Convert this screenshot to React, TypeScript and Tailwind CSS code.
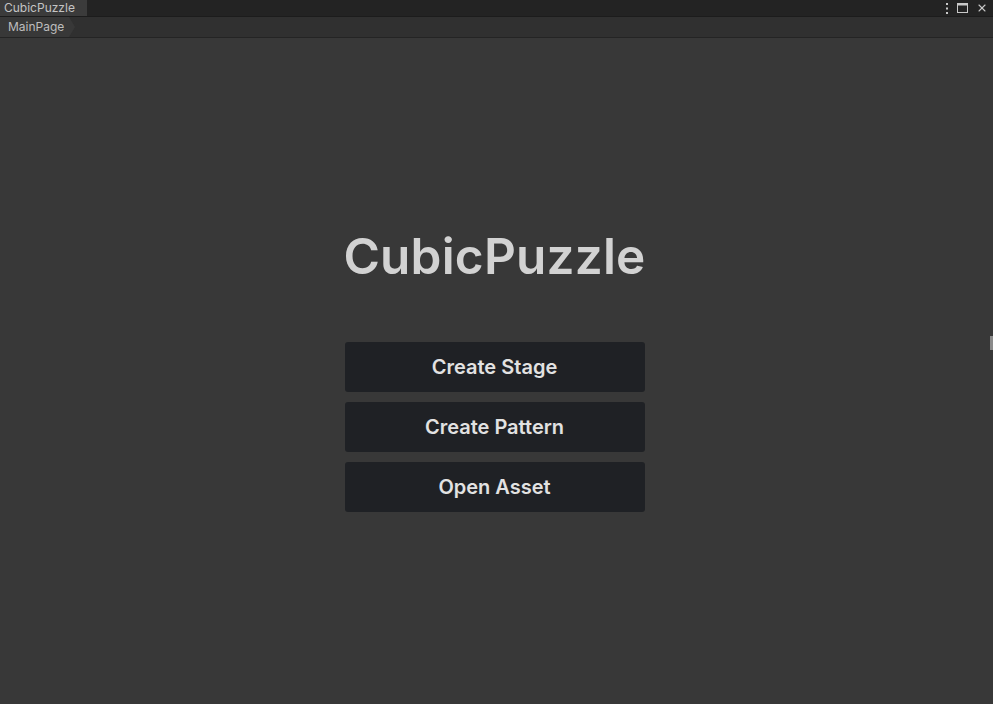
import { X } from 'lucide-react'

const buttons = ['Create Stage', 'Create Pattern', 'Open Asset']

export default function App() {
  return (
    <div className="w-[993px] h-[704px] flex flex-col bg-[#383838] overflow-hidden font-['Inter',sans-serif]">
      {/* window tab bar */}
      <div className="h-[17px] flex items-stretch bg-[#232323] border-b border-[#1c1c1c]">
        <div className="w-[87px] bg-[#3b3b3b] text-[#c4c4c4] text-[12px] leading-[16px] pl-[4px]">CubicPuzzle</div>
        <div className="flex-1" />
        <div className="flex items-center gap-[8px] pr-[5px] text-[#c8c8c8]">
          <svg width="4" height="11" viewBox="0 0 4 11">
            <rect x="1" y="0" width="2" height="2" fill="currentColor" />
            <rect x="1" y="4.5" width="2" height="2" fill="currentColor" />
            <rect x="1" y="9" width="2" height="2" fill="currentColor" />
          </svg>
          <svg width="11" height="10" viewBox="0 0 11 10">
            <rect x="0.5" y="0.5" width="10" height="9" fill="none" stroke="currentColor" />
            <rect x="0.5" y="0.5" width="10" height="2" fill="currentColor" />
          </svg>
          <X className="w-[12px] h-[12px]" strokeWidth={2.2} />
        </div>
      </div>

      {/* breadcrumb */}
      <div className="h-[21px] flex items-stretch bg-[#303030] border-b border-[#242424]">
        <div className="flex items-stretch">
          <div className="bg-[#383838] text-[#bdbdbd] text-[12px] leading-[20px] pl-[8px] pr-[2px]">MainPage</div>
          <svg width="9" height="20" viewBox="0 0 9 20">
            <polygon points="0,0 3,0 9,10 3,20 0,20" fill="#383838" />
          </svg>
        </div>
      </div>

      {/* main page */}
      <div className="flex-1 flex flex-col items-center pt-[189px] pr-[4px] relative">
        <h1 className="text-[#d2d2d2] text-[49.5px] font-semibold leading-[58px] tracking-[0.2px]">CubicPuzzle</h1>
        <div className="mt-[57px] flex flex-col gap-[10px]">
          {buttons.map((label) => (
            <button
              key={label}
              className="w-[300px] h-[50px] rounded-[3px] bg-[#1f2125] text-[#e2e2e2] text-[20px] font-semibold"
            >
              {label}
            </button>
          ))}
        </div>
        <div className="absolute right-0 top-[298px] w-[3px] h-[14px] bg-[#8a8a8a]" />
      </div>
    </div>
  )
}
